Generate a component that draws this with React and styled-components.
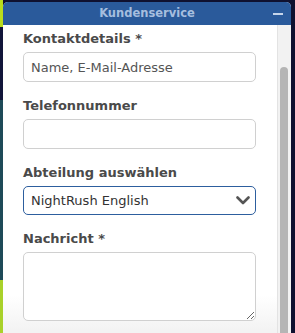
import React from "react"
import styled, { createGlobalStyle } from "styled-components"

const GlobalStyle = createGlobalStyle`
    html, body{
        margin: 0;
        padding: 0;
    }
    body{
        height: 333px;
        overflow: hidden;
        font-family: "DejaVu Sans", Verdana, sans-serif;
        background:
            linear-gradient(to bottom, #b9dc1c 0 27px, #12163a 27px 100px, #1e4a58 100px 280px, #a9d12a 280px) left top / 3px 100% no-repeat,
            #0f1130;
    }
`

export default function App(){
    return(
        <>
            <GlobalStyle/>
            <Widget>
                <Header>
                    <span></span>
                    <Titel>Kundenservice</Titel>
                    <Minimieren aria-label="minimieren"/>
                </Header>
                <Inhalt>
                    <Formular>
                        <Feld>
                            <Label htmlFor="kontakt">Kontaktdetails *</Label>
                            <Eingabe id="kontakt" type="text" placeholder="Name, E-Mail-Adresse"/>
                        </Feld>
                        <Feld>
                            <Label htmlFor="telefon">Telefonnummer</Label>
                            <Eingabe id="telefon" type="text"/>
                        </Feld>
                        <Feld>
                            <Label htmlFor="abteilung">Abteilung auswählen</Label>
                            <SelectBox>
                                <Auswahl id="abteilung" defaultValue="nr-en">
                                    <option value="nr-en">NightRush English</option>
                                    <option value="nr-de">NightRush Deutsch</option>
                                </Auswahl>
                                <Pfeil width="14" height="9" viewBox="0 0 14 9">
                                    <polyline points="1.5,1.5 7,7 12.5,1.5" fill="none" stroke="#555" strokeWidth="2.6" strokeLinecap="round" strokeLinejoin="round"/>
                                </Pfeil>
                            </SelectBox>
                        </Feld>
                        <Feld>
                            <Label htmlFor="nachricht">Nachricht *</Label>
                            <Textfeld id="nachricht"/>
                        </Feld>
                        <Trenner/>
                    </Formular>
                    <Scrollleiste>
                        <Daumen/>
                    </Scrollleiste>
                </Inhalt>
            </Widget>
        </>
    )
}

const Widget = styled.div`
    width: 288px;
    height: 331px;
    margin: 2px 0 0 3px;
    display: flex;
    flex-direction: column;
    border-radius: 5px 5px 0 0;
    overflow: hidden;
    background: #ffffff;
`
const Header = styled.div`
    height: 23px;
    flex-shrink: 0;
    display: grid;
    grid-template-columns: 1fr auto 1fr;
    align-items: center;
    background: #2a5a9b;
`
const Titel = styled.h1`
    margin: 0;
    font-size: 11.5px;
    font-weight: 700;
    line-height: 23px;
    color: #a6bedf;
`
const Minimieren = styled.button`
    justify-self: end;
    width: 10px;
    height: 2px;
    margin-right: 8px;
    padding: 0;
    border: none;
    background: #c6d5ea;
`
const Inhalt = styled.div`
    flex: 1;
    display: flex;
    min-height: 0;
`
const Formular = styled.form`
    flex: 1;
    display: flex;
    flex-direction: column;
    padding: 6px 21px 0 20px;
    background: linear-gradient(to bottom, #ffffff 0 270px, #f3f3f3 305px);
`
const Feld = styled.div`
    display: flex;
    flex-direction: column;
    margin-bottom: 16px;
`
const Label = styled.label`
    font-size: 13px;
    font-weight: 700;
    line-height: 16px;
    color: #4a4a4a;
    margin-bottom: 5px;
`
const Eingabe = styled.input`
    box-sizing: border-box;
    width: 233px;
    height: 30px;
    padding: 0 7px;
    border: 1px solid #d0d0d0;
    border-radius: 5px;
    background: #ffffff;
    font-family: "DejaVu Sans", Verdana, sans-serif;
    font-size: 13px;
    color: #333333;
    outline: none;

    &::placeholder{
        color: #555555;
    }
`
const SelectBox = styled.div`
    position: relative;
    width: 233px;
`
const Auswahl = styled.select`
    box-sizing: border-box;
    width: 233px;
    height: 29px;
    padding: 0 7px;
    appearance: none;
    border: 1px solid #2d5e9e;
    border-radius: 5px;
    background: #ffffff;
    font-family: "DejaVu Sans", Verdana, sans-serif;
    font-size: 13px;
    color: #333333;
    outline: none;
`
const Pfeil = styled.svg`
    position: absolute;
    right: 6px;
    top: 10px;
    pointer-events: none;
`
const Textfeld = styled.textarea`
    box-sizing: border-box;
    width: 233px;
    height: 69px;
    padding: 6px 7px;
    border: 1px solid #d0d0d0;
    border-radius: 5px;
    background: #ffffff;
    font-family: "DejaVu Sans", Verdana, sans-serif;
    font-size: 13px;
    resize: vertical;
    outline: none;
`
const Trenner = styled.div`
    margin: auto -21px 2px -23px;
    height: 2px;
    background: #cddff2;
`
const Scrollleiste = styled.div`
    width: 14px;
    flex-shrink: 0;
    display: flex;
    flex-direction: column;
    box-sizing: border-box;
    border-left: 1px solid #e3e3e3;
    background: #f2f2f2;
`
const Daumen = styled.div`
    flex: 1;
    width: 8px;
    margin: 42px 0 0 2px;
    border-radius: 4px 4px 0 0;
    background: #b5b5b5;
`
